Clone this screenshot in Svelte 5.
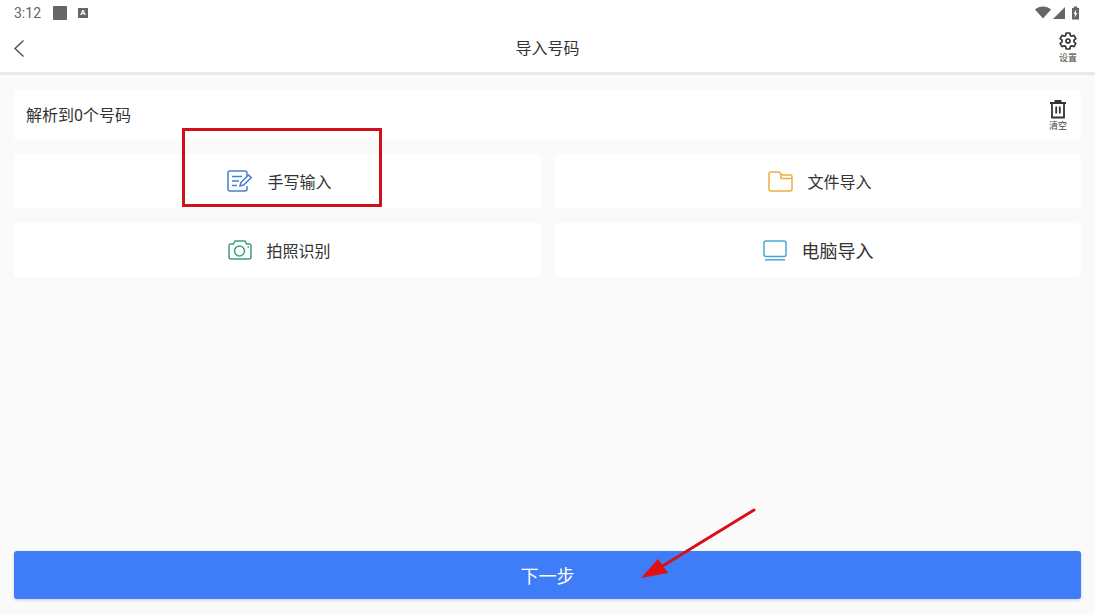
<script lang="ts">
	const actions = [
		{ label: '手写输入', icon: 'edit', size: 'md' },
		{ label: '文件导入', icon: 'folder', size: 'md' },
		{ label: '拍照识别', icon: 'camera', size: 'md' },
		{ label: '电脑导入', icon: 'screen', size: 'lg' }
	];
</script>

<div class="page">
	<div class="top">
		<div class="status">
			<span class="time">3:12</span>
			<span class="square"></span>
			<span class="a-badge">A</span>
			<span class="spacer"></span>
			<svg class="sys" width="46" height="14" viewBox="0 0 46 14">
				<path d="M1 3.500C5-.5 13-.5 17 3.500L9 12.500Z" fill="#666" />
				<path d="M31 1V13H19Z" fill="#666" />
				<path d="M38 2h1.800V.5h3.400V2H45V13.500h-7Z" fill="#666" />
				<path d="M42 3.500L39.500 8h1.600l-.6 3.800L43.500 7h-1.600Z" fill="#fff" />
			</svg>
		</div>
		<div class="nav">
			<svg class="back" width="14" height="20" viewBox="0 0 14 20">
				<path d="M11.500 2.500L3 10.500l8.500 8" fill="none" stroke="#555" stroke-width="1.500" />
			</svg>
			<span class="title">导入号码</span>
			<div class="settings">
				<svg width="20" height="20" viewBox="0 0 24 24">
					<path d="M19.140 12.940c.04-.3.06-.61.06-.94 0-.32-.02-.64-.07-.94l2.030-1.580c.18-.14.23-.41.12-.61l-1.920-3.320c-.12-.22-.37-.29-.59-.22l-2.390.96c-.5-.38-1.030-.7-1.620-.94l-.36-2.540c-.04-.24-.24-.41-.48-.41h-3.840c-.24 0-.43.17-.47.41l-.36 2.540c-.59.24-1.130.57-1.620.94l-2.390-.96c-.22-.08-.47 0-.59.22L2.740 8.870c-.12.21-.08.47.12.61l2.030 1.580c-.05.3-.09.63-.09.94s.02.64.07.94l-2.030 1.580c-.18.14-.23.41-.12.61l1.920 3.320c.12.22.37.29.59.22l2.390-.96c.5.38 1.030.7 1.620.94l.36 2.540c.05.24.24.41.48.41h3.840c.24 0 .44-.17.47-.41l.36-2.540c.59-.24 1.130-.56 1.620-.94l2.390.96c.22.08.47 0 .59-.22l1.920-3.320c.12-.22.07-.47-.12-.61l-2.010-1.580z" fill="none" stroke="#333" stroke-width="2" stroke-linejoin="round" />
					<circle cx="12" cy="12" r="2.400" fill="none" stroke="#333" stroke-width="2" />
				</svg>
				<span>设置</span>
			</div>
		</div>
	</div>

	<main class="content">
		<div class="parsed">
			<span>解析到0个号码</span>
			<div class="clear">
				<svg width="18" height="20" viewBox="0 0 18 20">
					<path d="M1 4h16" fill="none" stroke="#333" stroke-width="2" />
					<path d="M5.500 3.500V1h7v2.500Z" fill="#333" />
					<path d="M3 4v14.500h12V4" fill="none" stroke="#333" stroke-width="1.800" />
					<path d="M7.200 7.500v7M10.800 7.500v7" stroke="#333" stroke-width="1.800" />
				</svg>
				<span>清空</span>
			</div>
		</div>

		<div class="grid">
			{#each actions as a}
				<div class="action {a.size}">
					{#if a.icon === 'edit'}
						<svg width="26" height="22" viewBox="0 0 26 22" fill="none" stroke="#4a7fd0" stroke-width="1.500">
							<path d="M20 6V3a2 2 0 0 0-2-2H3a2 2 0 0 0-2 2v16a2 2 0 0 0 2 2h15a2 2 0 0 0 2-2v-3" />
							<path d="M5 6.500h10M5 11h7M5 15.500h5" />
							<path d="M13 16l1-3.500 7.500-7.500 2.800 2.600-7.600 7.500Z" />
						</svg>
					{:else if a.icon === 'folder'}
						<svg width="25" height="21" viewBox="0 0 25 21" fill="none" stroke="#f0ae3c" stroke-width="1.500">
							<path d="M1 3a2 2 0 0 1 2-2h8l3 3h8.500a1.500 1.500 0 0 1 1.500 1.500V18a2 2 0 0 1-2 2H3a2 2 0 0 1-2-2Z" />
							<path d="M13 3v4.500h11" />
						</svg>
					{:else if a.icon === 'camera'}
						<svg width="24" height="20" viewBox="0 0 24 20" fill="none" stroke="#3f9e78" stroke-width="1.500">
							<path d="M1 6a2 2 0 0 1 2-2h2.500L7 1h10l1.500 3H21a2 2 0 0 1 2 2v11a2 2 0 0 1-2 2H3a2 2 0 0 1-2-2Z" />
							<circle cx="11.500" cy="11" r="5" />
							<path d="M19.500 7h1.500" />
						</svg>
					{:else}
						<svg width="24" height="21" viewBox="0 0 24 21" fill="none" stroke="#4aa6dc" stroke-width="1.500">
							<rect x="1" y="1" width="22" height="15.500" rx="2" />
							<path d="M2 19.800h20" />
						</svg>
					{/if}
					<span>{a.label}</span>
				</div>
			{/each}
		</div>

		<button class="next" type="button">下一步</button>
	</main>

	<div class="red-box"></div>
	<svg class="arrow" width="120" height="74" viewBox="0 0 120 74">
		<path d="M114 3L16 63" stroke="#d8101a" stroke-width="3" stroke-linecap="round" />
		<path d="M1 71L18 52 28 66Z" fill="#e01010" />
	</svg>
</div>

<style>
	:global(body) {
		margin: 0;
		background: #fafafa;
	}
	.page {
		position: relative;
		width: 1095px;
		height: 615px;
		overflow: hidden;
		display: flex;
		flex-direction: column;
		background: #fafafa;
		font-family: Roboto, 'Noto Sans CJK SC', sans-serif;
		color: #333;
	}
	.top {
		height: 72px;
		background: #fff;
		border-bottom: 3px solid #e9e9e9;
		flex-shrink: 0;
	}
	.status {
		height: 25px;
		display: flex;
		align-items: center;
		padding: 0 14px;
	}
	.time {
		font-size: 14px;
		color: #666;
		width: 39px;
	}
	.square {
		width: 14px;
		height: 14px;
		background: #666;
		border-radius: 1px;
	}
	.a-badge {
		margin-left: 11px;
		width: 10px;
		height: 10px;
		background: #666;
		color: #fff;
		font-size: 8px;
		font-weight: 700;
		line-height: 10px;
		text-align: center;
	}
	.spacer {
		flex: 1;
	}
	.sys {
		margin-right: 1px;
	}
	.nav {
		position: relative;
		height: 47px;
		display: flex;
		align-items: center;
		justify-content: center;
	}
	.back {
		position: absolute;
		left: 12px;
		top: 13px;
	}
	.title {
		font-size: 16px;
		color: #333;
		margin-top: -3px;
	}
	.settings {
		position: absolute;
		right: 17px;
		top: 6px;
		width: 20px;
		display: flex;
		flex-direction: column;
		align-items: center;
		gap: 2px;
	}
	.settings span,
	.clear span {
		font-size: 9px;
		line-height: 10px;
		white-space: nowrap;
		color: #444;
	}
	.content {
		flex: 1;
		display: flex;
		flex-direction: column;
		padding: 15px 14px 16px;
	}
	.parsed {
		height: 50px;
		background: #fff;
		border-radius: 3px;
		display: flex;
		align-items: center;
		justify-content: space-between;
		padding: 0 14px 0 12px;
		font-size: 16px;
	}
	.parsed > span {
		margin-top: -3px;
	}
	.clear {
		display: flex;
		flex-direction: column;
		align-items: center;
		gap: 2px;
		width: 18px;
	}
	.grid {
		display: grid;
		grid-template-columns: 527px 526px;
		grid-auto-rows: 54px;
		column-gap: 14px;
		row-gap: 15px;
		margin-top: 14px;
	}
	.action {
		background: #fff;
		border-radius: 3px;
		display: flex;
		align-items: center;
		justify-content: center;
		gap: 14px;
		font-size: 16px;
	}
	.action span {
		margin-top: -1px;
	}
	.action.md {
		padding-left: 4px;
	}
	.action.lg span {
		font-size: 18px;
		margin-left: 1px;
	}
	.next {
		margin-top: auto;
		height: 48px;
		border: none;
		border-radius: 3px;
		background: #3f7cf7;
		color: #fff;
		font-family: inherit;
		font-size: 18px;
		padding-bottom: 2px;
		box-shadow: 0 1px 3px rgba(60, 110, 220, 0.3);
	}
	.red-box {
		position: absolute;
		left: 182px;
		top: 128px;
		width: 194px;
		height: 73px;
		border: 3px solid #d0101a;
	}
	.arrow {
		position: absolute;
		left: 640px;
		top: 507px;
	}
</style>
